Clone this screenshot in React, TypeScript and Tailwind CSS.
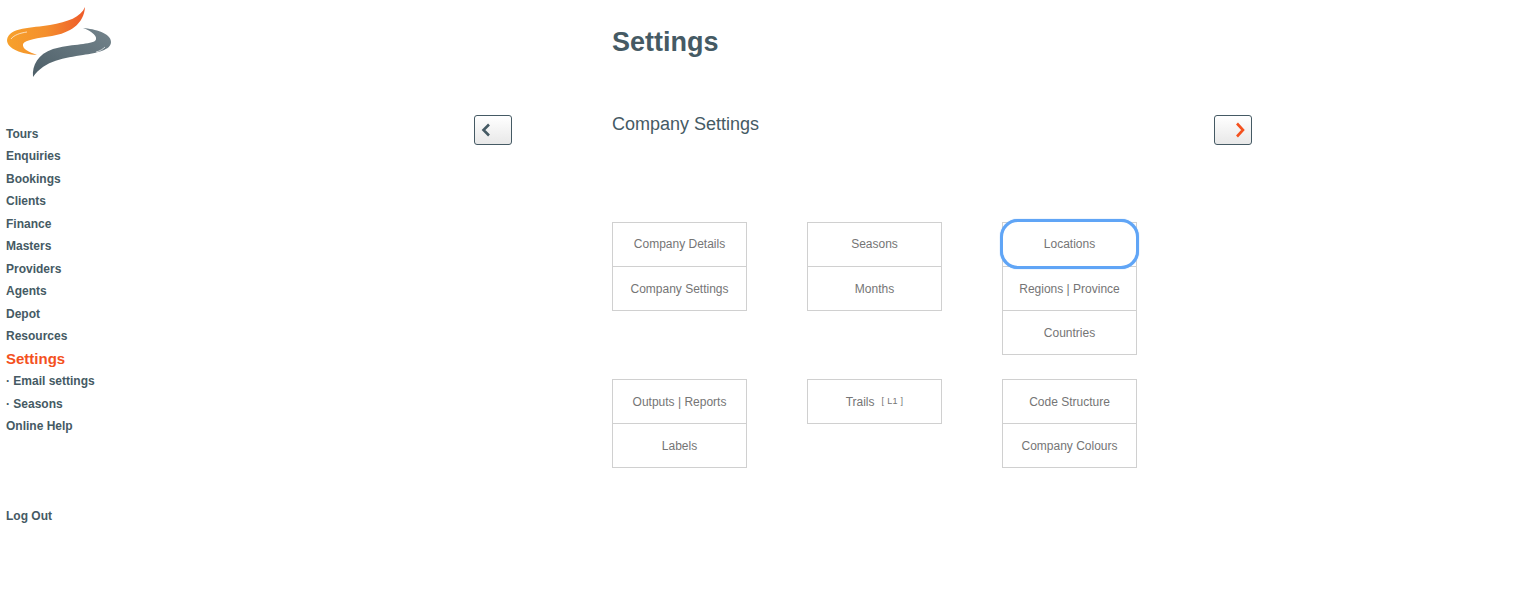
const NAV = ["Tours", "Enquiries", "Bookings", "Clients", "Finance", "Masters", "Providers", "Agents", "Depot", "Resources"]

const GRID = [
  [["Company Details", "Company Settings"], ["Seasons", "Months"], ["Locations", "Regions | Province", "Countries"]],
  [["Outputs | Reports", "Labels"], ["Trails"], ["Code Structure", "Company Colours"]],
]

function Logo() {
  return (
    <svg width="120" height="84" viewBox="0 0 120 84" className="block blur-[0.4px]">
      <defs>
        <linearGradient id="flame" x1="0" y1="0" x2="1" y2="0">
          <stop offset="0" stopColor="#f7a12c" />
          <stop offset="0.5" stopColor="#f48f2d" />
          <stop offset="1" stopColor="#ee5a2a" />
        </linearGradient>
        <linearGradient id="slate" x1="0" y1="1" x2="1" y2="0">
          <stop offset="0" stopColor="#4d5f68" />
          <stop offset="1" stopColor="#74848c" />
        </linearGradient>
      </defs>
      <path d="M85 7C81 17 68 22 50 25C32 28 9 27 7 40C7 49 22 54 37 55C29 52 22 49 23 44C25 40 38 38 52 36C70 33 84 24 85 7Z" fill="url(#flame)" />
      <path d="M83 28C95 29 111 33 111 42C111 50 97 53 83 55C65 58 45 60 33 77C32 65 38 54 53 49C70 44 88 45 95 41C99 37 92 31 83 28Z" fill="url(#slate)" />
      <path d="M11 39C14 35 20 33 27 32" stroke="#fff" strokeOpacity="0.75" strokeWidth="0.9" fill="none" />
      <path d="M105 47C103 49 100 51 96 52" stroke="#fff" strokeOpacity="0.75" strokeWidth="0.9" fill="none" />
    </svg>
  )
}

function NavLink({ children }: { children: React.ReactNode }) {
  return <a className="h-[22.5px] leading-[22.5px] text-[12px] font-bold text-[#455a64]">{children}</a>
}

function ArrowButton({ dir }: { dir: "left" | "right" }) {
  return (
    <button className={`w-[38px] h-[30px] flex items-center rounded-[3px] border border-[#455a64] bg-gradient-to-b from-white to-[#e8e8e8] ${dir === "left" ? "justify-start pl-[5px]" : "justify-end pr-[5px]"}`}>
      <svg width="12" height="16" viewBox="0 0 12 16" fill="none" strokeWidth="2.6" stroke={dir === "left" ? "#455a64" : "#f4511e"}>
        <path d={dir === "left" ? "M9 2.5L3.5 8L9 13.5" : "M3 1.5L9 8L3 14.5"} />
      </svg>
    </button>
  )
}

function Cell({ label, raised }: { label: string; raised: boolean }) {
  return (
    <a className={`relative flex h-[44px] last:h-[43px] items-center justify-center border-b border-[#d0d0d0] last:border-b-0 text-[12px] text-[#757575] ${raised ? "first:pb-[1px]" : ""}`}>
      {label}
      {label === "Trails" && <span className="ml-[7px] text-[9px] tracking-[0.3px]">[ L1 ]</span>}
      {label === "Locations" && (
        <span className="absolute left-[-3px] right-[-3px] top-[-4px] bottom-[-3px] flex items-center justify-center rounded-[18px] border-[3px] border-[#60a5f6] bg-white pb-[1px] shadow-[0_0_1px_#60a5f6]">
          {label}
        </span>
      )}
    </a>
  )
}

export default function App() {
  return (
    <div className="flex min-h-[595px] bg-white font-['Liberation_Sans',Arial,sans-serif]">
      <aside className="w-[474px] shrink-0 flex flex-col pl-[6px]">
        <div className="-ml-[6px] h-[122.5px]">
          <Logo />
        </div>
        <nav className="flex flex-col">
          {NAV.map(n => <NavLink key={n}>{n}</NavLink>)}
          <a className="h-[22.5px] leading-[22.5px] text-[15px] font-bold text-[#f4511e]">Settings</a>
          <NavLink>· Email settings</NavLink>
          <NavLink>· Seasons</NavLink>
          <NavLink>Online Help</NavLink>
          <a className="mt-[67.5px] h-[22.5px] leading-[22.5px] text-[12px] font-bold text-[#455a64]">Log Out</a>
        </nav>
      </aside>

      <main className="w-[778px] shrink-0">
        <div className="pl-[138px] pt-[25px] h-[115px]">
          <h1 className="text-[27px] leading-[34px] font-bold text-[#455a64]">Settings</h1>
        </div>
        <div className="flex justify-between items-start h-[107px]">
          <ArrowButton dir="left" />
          <h2 className="flex-1 pl-[100px] -mt-[2px] text-[18px] leading-[22px] text-[#455a64]">Company Settings</h2>
          <ArrowButton dir="right" />
        </div>
        <div className="pl-[138px] flex flex-col gap-[24.49px]">
          {GRID.map((row, i) => (
            <div key={i} className="flex items-start gap-[60px]">
              {row.map(col => (
                <div key={col[0]} className="w-[135px] flex flex-col border border-[#d0d0d0]">
                  {col.map(label => <Cell key={label} label={label} raised={i === 0} />)}
                </div>
              ))}
            </div>
          ))}
        </div>
      </main>
    </div>
  )
}
